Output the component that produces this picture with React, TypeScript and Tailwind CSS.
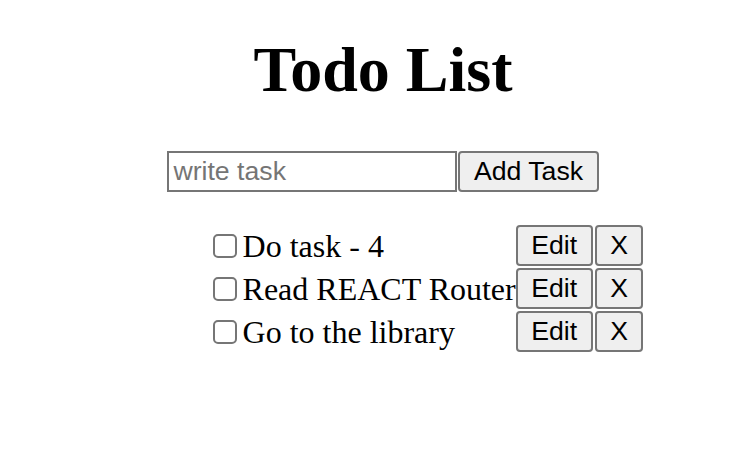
import React, { useState } from 'react';

type Task = { id: number; text: string; done: boolean };

const initialTasks: Task[] = [
  { id: 1, text: 'Do task - 4', done: false },
  { id: 2, text: 'Read REACT Router', done: false },
  { id: 3, text: 'Go to the library', done: false },
];

const btn =
  "bg-[#efefef] border-2 border-[#767676] rounded-[4px] px-[13.5px] text-[26.67px] leading-none text-black font-['Liberation_Sans',Arial,sans-serif]";

const App = () => {
  const [tasks, setTasks] = useState<Task[]>(initialTasks);
  const [input, setInput] = useState('');

  const addTask = () => {
    if (!input.trim()) return;
    setTasks([...tasks, { id: Date.now(), text: input, done: false }]);
    setInput('');
  };

  return (
    <div className="min-h-screen bg-white text-black font-['Liberation_Serif','Times_New_Roman',serif]">
      <div className="flex flex-col items-center pt-[38px] pl-[18px]">
        {/* Title */}
        <h1 className="m-0 text-[64px] leading-[64px] font-bold">Todo List</h1>

        {/* Add form */}
        <div className="flex mt-[49px]">
          <input
            value={input}
            onChange={(e) => setInput(e.target.value)}
            placeholder="write task"
            className="w-[290px] h-[41px] border-2 border-[#767676] px-[4px] text-[26.67px] bg-white outline-none placeholder:text-[#757575] font-['Liberation_Sans',Arial,sans-serif]"
          />
          <button onClick={addTask} className={`${btn} h-[41px] ml-px`}>
            Add Task
          </button>
        </div>

        {/* Tasks */}
        <div className="pl-[90px] mt-[32px]">
          <ul className="flex flex-col w-fit m-0 p-0 list-none">
            {tasks.map((t) => (
              <li key={t.id} className="flex items-center h-[43px]">
                <div className="flex flex-1 items-center gap-[6px]">
                  <input
                    type="checkbox"
                    checked={t.done}
                    onChange={() =>
                      setTasks(tasks.map((x) => (x.id === t.id ? { ...x, done: !x.done } : x)))
                    }
                    className="appearance-none w-[24px] h-[24px] border-2 border-[#767676] rounded-[5px] bg-white m-0"
                  />
                  <span className="text-[32px] leading-none whitespace-nowrap">{t.text}</span>
                </div>
                <div className="flex gap-[2px]">
                  <button className={`${btn} h-[41px]`}>Edit</button>
                  <button
                    onClick={() => setTasks(tasks.filter((x) => x.id !== t.id))}
                    className={`${btn} h-[41px]`}
                  >
                    X
                  </button>
                </div>
              </li>
            ))}
          </ul>
        </div>
      </div>
    </div>
  );
};

export default App;
